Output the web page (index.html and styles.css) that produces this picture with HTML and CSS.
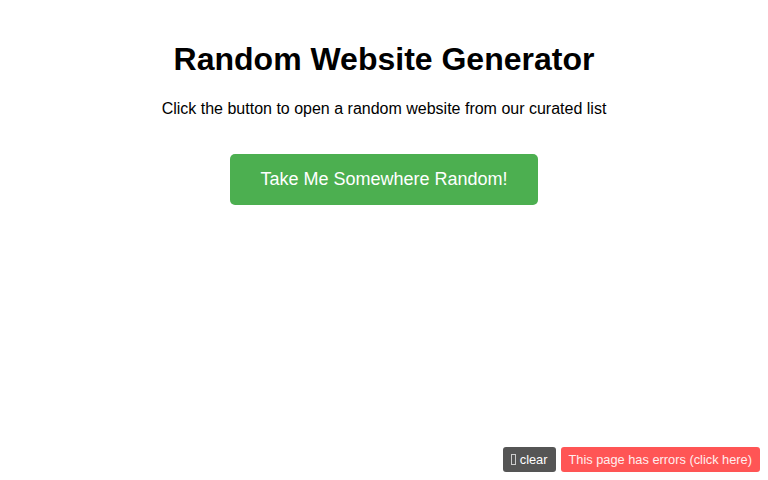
FILE: index.html
```html
<!DOCTYPE html>
<html>
<head>
<meta charset="utf-8">
<link rel="stylesheet" href="styles.css">
</head>
<body>
<div class="container">
  <h1>Random Website Generator</h1>
  <p>Click the button to open a random website from our curated list</p>
  <button class="go">Take Me Somewhere Random!</button>
</div>
<div class="errbar">
  <span class="clear"><span class="tofu"></span> clear</span>
  <span class="errors">This page has errors (click here)</span>
</div>
</body>
</html>
```
FILE: styles.css
```css
html, body { margin: 0; background: #fff; }
body {
  font-family: "Liberation Sans", Arial, sans-serif;
  padding: 20px;
  text-align: center;
  color: #000;
}
h1 { font-size: 32px; margin: 21px 0; }
p { font-size: 16px; margin: 22px 0 16px; }
.go {
  font-family: "Liberation Sans", Arial, sans-serif;
  background: #4CAF50;
  color: #fff;
  border: none;
  border-radius: 5px;
  font-size: 18px;
  padding: 15px 30px;
  margin-top: 20px;
  cursor: pointer;
}
.errbar {
  position: fixed;
  right: 8px;
  bottom: 8px;
  display: flex;
  gap: 5px;
  font-size: 12.8px;
}
.errbar span.clear, .errbar span.errors {
  display: inline-block;
  padding: 5px 8px;
  border-radius: 3px;
  color: #fff;
  line-height: 15px;
}
.clear { background: #555; }
.errors { background: #f55; color: #fee !important; }
.tofu {
  display: inline-block;
  width: 3px;
  height: 9px;
  border: 1px solid #ccc;
  vertical-align: -1px;
}
```
